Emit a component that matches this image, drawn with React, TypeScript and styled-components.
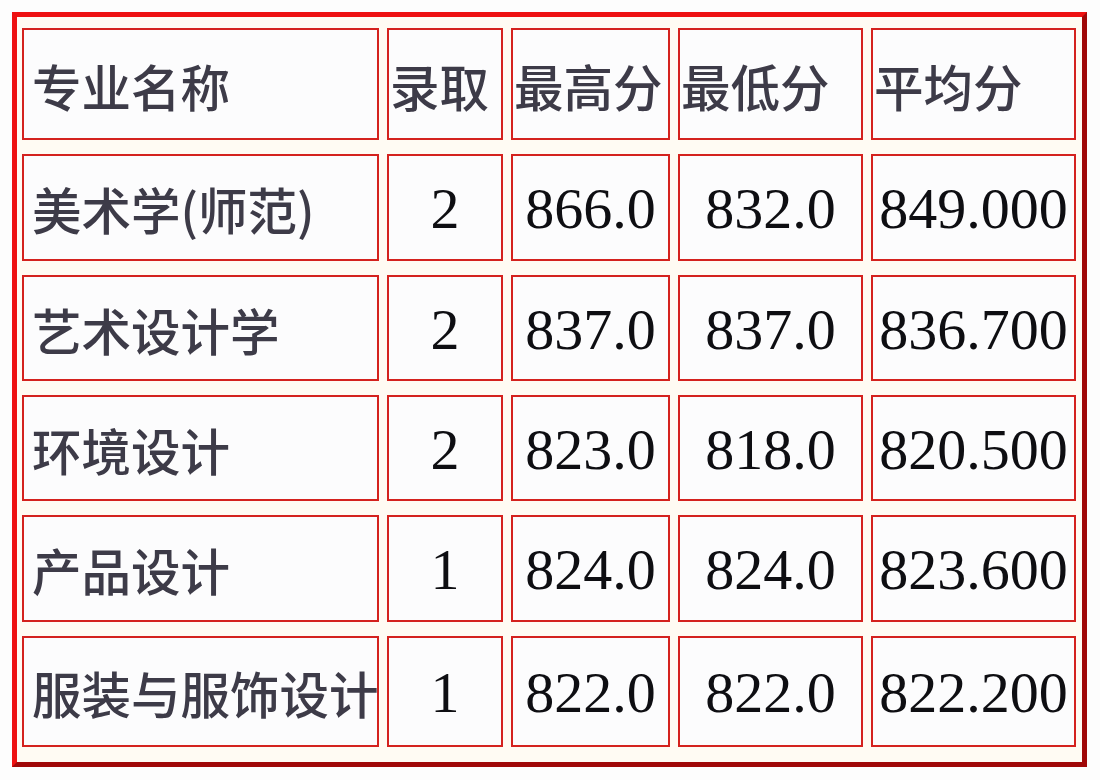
import React from "react";
import styled, { createGlobalStyle } from "styled-components";

const GlobalStyle = createGlobalStyle`
  html, body {
    margin: 0;
    padding: 0;
    background: #fdfdfd;
  }
  body {
    font-family: "Noto Sans CJK SC", "Noto Sans", sans-serif;
  }
`;

const Page = styled.div`
  padding: 12px 0 0 12px;
  width: 1100px;
  height: 780px;
  box-sizing: border-box;
  background: #fdfdfd;
`;

const Frame = styled.div`
  width: 1075px;
  height: 755px;
  box-sizing: border-box;
  border-style: solid;
  border-width: 5px;
  border-color: #ee1111 #a00808 #a00808 #ee1111;
  background: #fffbf3;
  padding: 11px 5px 15px 5px;
  display: grid;
  grid-template-columns: 357px 116px 159px 185px 205px;
  grid-template-rows: 112px 107px 106px 106px 107px 111px;
  column-gap: 8px;
  row-gap: 14px;
`;

const Cell = styled.div<{ $align: "left" | "center"; $kind: "cjk" | "num"; $pad: number }>`
  box-sizing: border-box;
  border: 2px solid #d4221e;
  background: #fcfcfd;
  display: flex;
  align-items: center;
  justify-content: ${(p) => (p.$align === "left" ? "flex-start" : "center")};
  padding: 3px 0 0 ${(p) => p.$pad}px;
  white-space: nowrap;
  overflow: hidden;
  font-family: ${(p) =>
    p.$kind === "cjk"
      ? `"Noto Sans CJK SC", "Noto Sans", sans-serif`
      : `"Liberation Serif", "DejaVu Serif", serif`};
  font-size: ${(p) => (p.$kind === "cjk" ? "49.5px" : "58px")};
  font-weight: ${(p) => (p.$kind === "cjk" ? 500 : 400)};
  color: ${(p) => (p.$kind === "cjk" ? "#3d3b48" : "#0e0e12")};
  font-variant-numeric: oldstyle-nums;
  line-height: 1;
`;

const header = ["专业名称", "录取", "最高分", "最低分", "平均分"];

const rows: string[][] = [
  ["美术学(师范)", "2", "866.0", "832.0", "849.000"],
  ["艺术设计学", "2", "837.0", "837.0", "836.700"],
  ["环境设计", "2", "823.0", "818.0", "820.500"],
  ["产品设计", "1", "824.0", "824.0", "823.600"],
  ["服装与服饰设计", "1", "822.0", "822.0", "822.200"],
];

export default function App() {
  return (
    <>
      <GlobalStyle />
      <Page>
        <Frame>
          {header.map((h, i) => (
            <Cell key={`h${i}`} $align="left" $kind="cjk" $pad={i === 0 ? 8 : 1}>
              {h}
            </Cell>
          ))}
          {rows.map((r, ri) =>
            r.map((v, ci) => (
              <Cell
                key={`r${ri}c${ci}`}
                $align={ci === 0 ? "left" : "center"}
                $kind={ci === 0 ? "cjk" : "num"}
                $pad={ci === 0 ? 8 : 0}
              >
                {v}
              </Cell>
            ))
          )}
        </Frame>
      </Page>
    </>
  );
}
